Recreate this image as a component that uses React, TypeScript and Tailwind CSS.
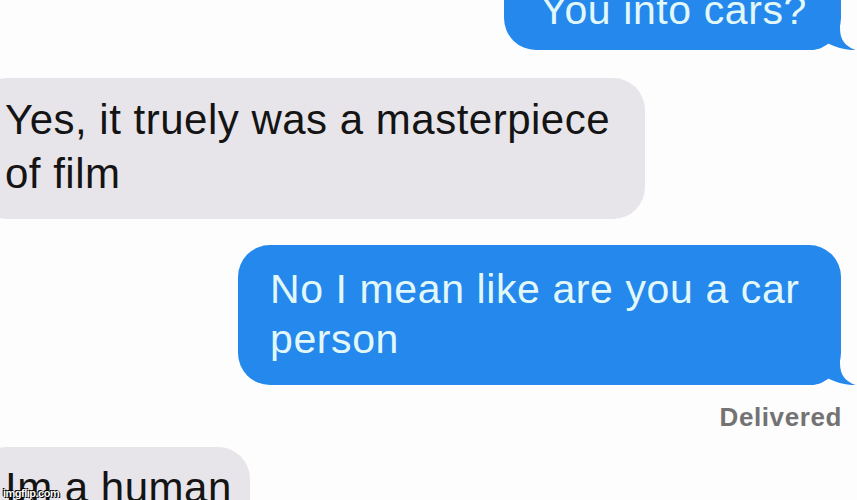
import React from 'react';

const BLUE = '#2488ec';

const Tail: React.FC = () => (
  <svg className="absolute -right-[15px] bottom-0 w-[46px] h-[40px]" viewBox="0 0 46 40">
    <path d="M0,0 H30 V18 C30,30 35,36 45.5,40 C38,40.5 27,38 17,33 C13,38 8,40 0,40 Z" fill={BLUE} />
  </svg>
);

const SentBubble: React.FC<{ className?: string; children: React.ReactNode }> = ({ className = '', children }) => (
  <div className={`relative self-end mr-[16px] rounded-[32px] bg-[#2488ec] text-[#e2f8f8] text-[41px] leading-[50px] tracking-[0.6px] ${className}`}>
    <span className="relative z-10">{children}</span>
    <Tail />
  </div>
);

const ReceivedBubble: React.FC<{ className?: string; children: React.ReactNode }> = ({ className = '', children }) => (
  <div className={`self-start -ml-[25px] pl-[30px] rounded-[32px] bg-[#e8e5ea] text-[#141414] text-[42px] leading-[54px] tracking-[0.5px] ${className}`}>
    {children}
  </div>
);

export default function App() {
  return (
    <div className="relative w-[857px] h-[500px] overflow-hidden bg-[#fdfdfd] font-['Liberation_Sans',Arial,sans-serif]">
      <div className="flex flex-col">
        <SentBubble className="-mt-[34px] pl-[36px] pr-[34px] pt-[19px] pb-[15px]">You into cars?</SentBubble>

        <ReceivedBubble className="mt-[28px] w-[670px] pt-[15px] pb-[18px]">
          Yes, it truely was a masterpiece
          <br />
          of film
        </ReceivedBubble>

        <SentBubble className="mt-[26px] w-[603px] pl-[32px] pt-[19px] pb-[21px]">
          No I mean like are you a car
          <br />
          person
        </SentBubble>

        <div className="self-end mr-[15px] mt-[17px] text-[26px] leading-[30px] font-bold tracking-[0.6px] text-[#737373]">
          Delivered
        </div>

        <ReceivedBubble className="mt-[15px] w-[275px] pt-[14px] pb-[18px]">Im a human</ReceivedBubble>
      </div>

      <div className="absolute left-[3px] bottom-[1px] text-[11px] leading-[12px] font-bold tracking-[-0.5px] text-white [text-shadow:0_0_1px_#000,0_0_1px_#000,1px_1px_0_#000,-1px_-1px_0_#000]">
        imgflip.com
      </div>
    </div>
  );
}
